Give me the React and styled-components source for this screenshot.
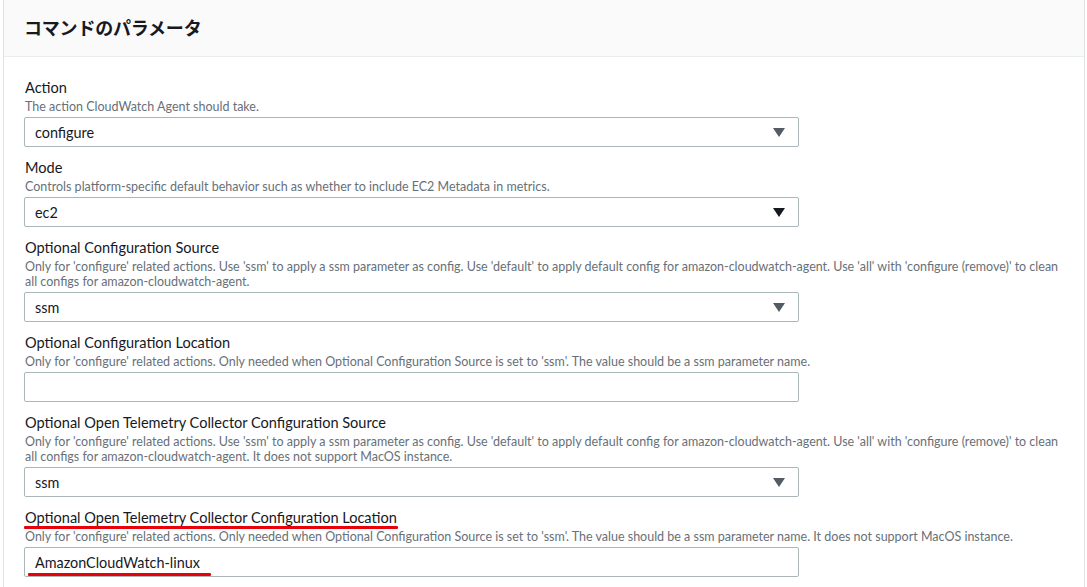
import React from "react";
import styled, { createGlobalStyle } from "styled-components";

const Global = createGlobalStyle`
  html, body { margin: 0; padding: 0; background: #ffffff; }
  body { font-family: Lato, "Noto Sans", "Noto Sans CJK JP", sans-serif; color: #16191f; }
`;

const Panel = styled.section`
  margin-left: 3px;
  width: 1082px;
  box-sizing: border-box;
  border-left: 1px solid #dfe3e3;
  border-right: 1px solid #dfe3e3;
  background: #ffffff;
`;

const Header = styled.header`
  height: 57px;
  box-sizing: border-box;
  background: #fafafa;
  border-bottom: 1px solid #eaeded;
  display: flex;
  align-items: center;
  padding: 0 20px 2px 20px;
`;

const Title = styled.h2`
  margin: 0;
  font-family: "Noto Sans CJK JP", sans-serif;
  font-size: 18px;
  font-weight: 700;
  color: #16191f;
  letter-spacing: -0.2px;
`;

const Body = styled.div`
  padding: 20px 20px 20px 20px;
  display: flex;
  flex-direction: column;
  gap: 10px;
`;

const Field = styled.div`
  display: flex;
  flex-direction: column;
`;

const Label = styled.label`
  font-size: 14.55px;
  line-height: 20px;
  padding-top: 1px;
  color: #16191f;
  padding-left: 1px;
  align-self: flex-start;
  position: relative;
  ${(p) =>
    p.$marked &&
    `
    &::after {
      content: "";
      position: absolute;
      left: 0;
      right: -1px;
      bottom: -1px;
      height: 3px;
      background: #e8000b;
      border-radius: 1px;
    }
  `}
`;

const Desc = styled.div`
  font-size: 12.5px;
  line-height: 15px;
  color: #687078;
  padding-left: 1px;
  margin-top: 1px;
  margin-bottom: 3px;
  white-space: nowrap;
`;

const Box = styled.div`
  width: 775px;
  height: 30px;
  box-sizing: border-box;
  border: 1px solid #aab7b8;
  border-radius: 2px;
  background: #ffffff;
  display: flex;
  align-items: center;
  justify-content: space-between;
  padding: 0 12px 0 10px;
  font-size: 14.4px;
  color: #16191f;
`;

const Value = styled.span`
  position: relative;
  ${(p) =>
    p.$marked &&
    `
    &::after {
      content: "";
      position: absolute;
      left: -7px;
      right: -11px;
      bottom: -5px;
      height: 3px;
      background: #e8000b;
      border-radius: 1px;
    }
  `}
`;

const Arrow = ({ dark }) => (
  <svg width="12" height="9" viewBox="0 0 12 9" style={{ marginRight: 1 }}>
    <path d="M0 0 H12 L6 9 Z" fill={dark ? "#16191f" : "#545b64"} />
  </svg>
);

const fields = [
  {
    label: "Action",
    desc: ["The action CloudWatch Agent should take."],
    value: "configure",
    select: true,
  },
  {
    label: "Mode",
    desc: [
      "Controls platform-specific default behavior such as whether to include EC2 Metadata in metrics.",
    ],
    value: "ec2",
    select: true,
    dark: true,
  },
  {
    label: "Optional Configuration Source",
    desc: [
      "Only for 'configure' related actions. Use 'ssm' to apply a ssm parameter as config. Use 'default' to apply default config for amazon-cloudwatch-agent. Use 'all' with 'configure (remove)' to clean",
      "all configs for amazon-cloudwatch-agent.",
    ],
    value: "ssm",
    select: true,
  },
  {
    label: "Optional Configuration Location",
    desc: [
      "Only for 'configure' related actions. Only needed when Optional Configuration Source is set to 'ssm'. The value should be a ssm parameter name.",
    ],
    value: "",
  },
  {
    label: "Optional Open Telemetry Collector Configuration Source",
    desc: [
      "Only for 'configure' related actions. Use 'ssm' to apply a ssm parameter as config. Use 'default' to apply default config for amazon-cloudwatch-agent. Use 'all' with 'configure (remove)' to clean",
      "all configs for amazon-cloudwatch-agent. It does not support MacOS instance.",
    ],
    value: "ssm",
    select: true,
  },
  {
    label: "Optional Open Telemetry Collector Configuration Location",
    desc: [
      "Only for 'configure' related actions. Only needed when Optional Configuration Source is set to 'ssm'. The value should be a ssm parameter name. It does not support MacOS instance.",
    ],
    value: "AmazonCloudWatch-linux",
    marked: true,
  },
];

export default function App() {
  return (
    <>
      <Global />
      <Panel>
        <Header>
          <Title>コマンドのパラメータ</Title>
        </Header>
        <Body>
          {fields.map((f) => (
            <Field key={f.label}>
              <Label $marked={f.marked}>{f.label}</Label>
              <Desc>
                {f.desc.map((d, i) => (
                  <div key={i}>{d}</div>
                ))}
              </Desc>
              <Box>
                <Value $marked={f.marked}>{f.value}</Value>
                {f.select && <Arrow dark={f.dark} />}
              </Box>
            </Field>
          ))}
        </Body>
      </Panel>
    </>
  );
}
